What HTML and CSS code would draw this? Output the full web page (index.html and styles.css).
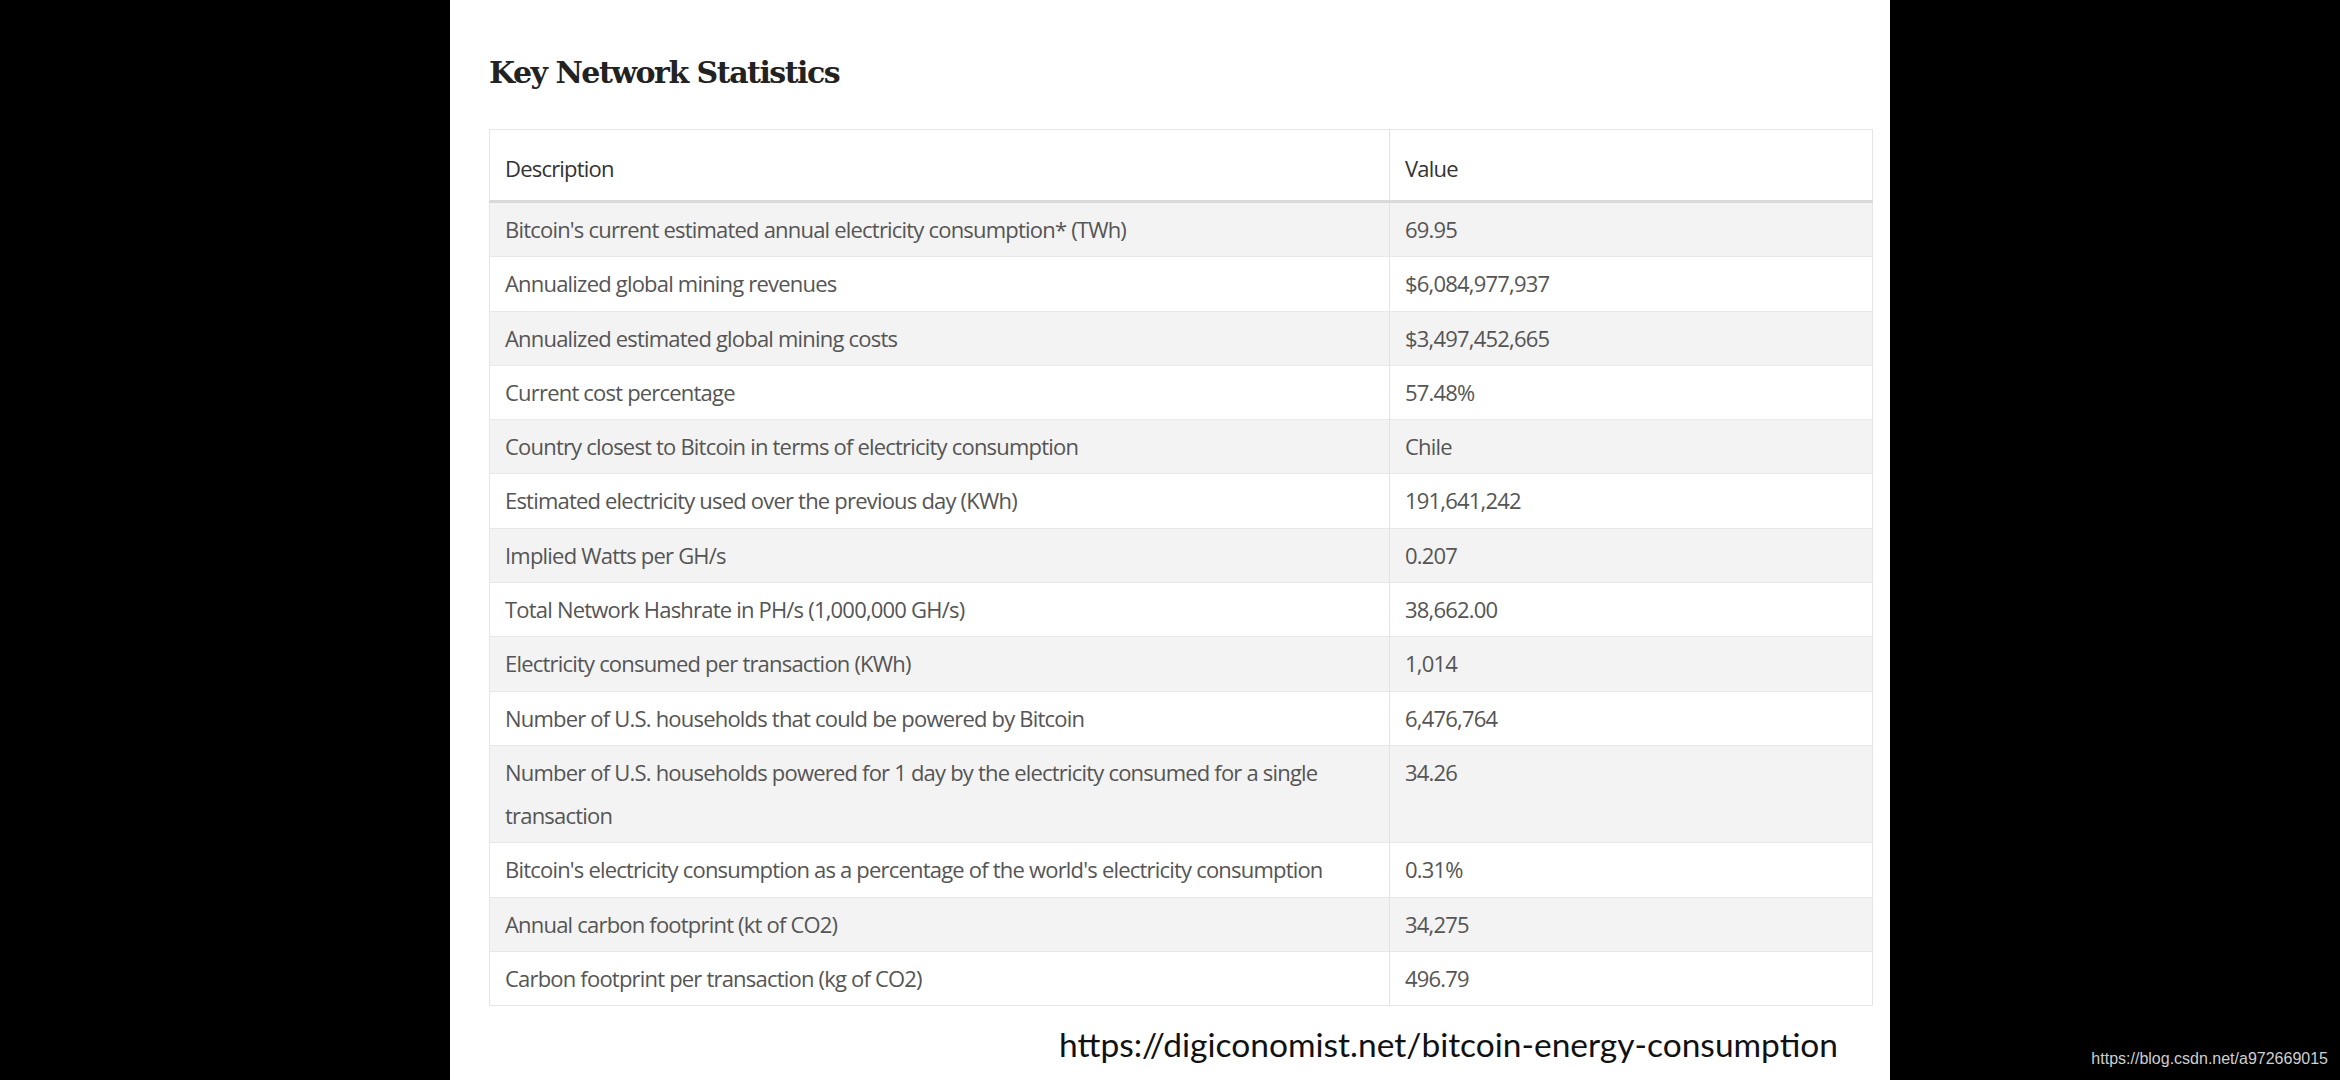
FILE: index.html
```html
<!DOCTYPE html>
<html lang="en">
<head>
<meta charset="utf-8">
<title>Key Network Statistics</title>
<link rel="stylesheet" href="styles.css">
</head>
<body>
<main class="page">
  <h2 class="title">Key Network Statistics</h2>
  <table class="stats">
    <thead>
      <tr><th class="col-desc">Description</th><th class="col-val">Value</th></tr>
    </thead>
    <tbody>
      <tr><td>Bitcoin's current estimated annual electricity consumption* (TWh)</td><td>69.95</td></tr>
      <tr><td>Annualized global mining revenues</td><td>$6,084,977,937</td></tr>
      <tr><td>Annualized estimated global mining costs</td><td>$3,497,452,665</td></tr>
      <tr><td>Current cost percentage</td><td>57.48%</td></tr>
      <tr><td>Country closest to Bitcoin in terms of electricity consumption</td><td>Chile</td></tr>
      <tr><td>Estimated electricity used over the previous day (KWh)</td><td>191,641,242</td></tr>
      <tr><td>Implied Watts per GH/s</td><td>0.207</td></tr>
      <tr><td>Total Network Hashrate in PH/s (1,000,000 GH/s)</td><td>38,662.00</td></tr>
      <tr><td>Electricity consumed per transaction (KWh)</td><td>1,014</td></tr>
      <tr><td>Number of U.S. households that could be powered by Bitcoin</td><td>6,476,764</td></tr>
      <tr><td>Number of U.S. households powered for 1 day by the electricity consumed for a single transaction</td><td>34.26</td></tr>
      <tr><td>Bitcoin's electricity consumption as a percentage of the world's electricity consumption</td><td>0.31%</td></tr>
      <tr><td>Annual carbon footprint (kt of CO2)</td><td>34,275</td></tr>
      <tr><td>Carbon footprint per transaction (kg of CO2)</td><td>496.79</td></tr>
    </tbody>
  </table>
  <p class="source">https://digiconomist.net/bitcoin-energy-consumption</p>
</main>
<div class="watermark">https://blog.csdn.net/a972669015</div>
</body>
</html>
```
FILE: styles.css
```css
html, body {
  margin: 0;
  padding: 0;
  background: #000;
}
body {
  width: 2340px;
  height: 1080px;
  overflow: hidden;
  position: relative;
}
.page {
  width: 1440px;
  height: 1080px;
  margin: 0 auto;
  background: #fff;
  box-sizing: border-box;
  padding: 0 17px 0 39px;
  display: flex;
  flex-direction: column;
  overflow: hidden;
}
.page > * {
  flex-shrink: 0;
}
.title {
  margin: 47px 0 0 0;
  height: 82px;
  font-family: "DejaVu Serif", serif;
  font-weight: bold;
  font-size: 30px;
  line-height: 52px;
  color: #222;
  letter-spacing: -1.5px;
}
.stats {
  width: 1384px;
  border-collapse: collapse;
  border: 1px solid #e6e6e6;
  font-family: "Open Sans", sans-serif;
  font-weight: 400;
  font-size: 22px;
  letter-spacing: -0.8px;
  line-height: 43px;
  color: #555;
}
.stats th, .stats td {
  text-align: left;
  vertical-align: top;
  padding: 5px 16px 5.3px 15px;
  border-top: 1px solid #e8e8e8;
}
.stats th {
  font-weight: 400;
  color: #333;
  padding: 17px 16px 10px 15px;
  border-top: 0;
  border-bottom: 3px solid #d9d9d9;
}
.stats td + td, .stats th + th {
  border-left: 1px solid #e3e3e3;
  padding-left: 15px;
}
.col-desc { width: 868px; }
.stats tbody tr:nth-child(odd) td {
  background: #f3f3f3;
}
.source {
  margin: 16px 0 0 0;
  padding-right: 35px;
  text-align: right;
  font-family: "Lato", sans-serif;
  font-size: 33.5px;
  line-height: 44px;
  color: #111;
}
.watermark {
  position: absolute;
  right: 12px;
  bottom: 12px;
  font-family: "Liberation Sans", Arial, sans-serif;
  font-size: 16px;
  color: #cfcfcf;
}
```
